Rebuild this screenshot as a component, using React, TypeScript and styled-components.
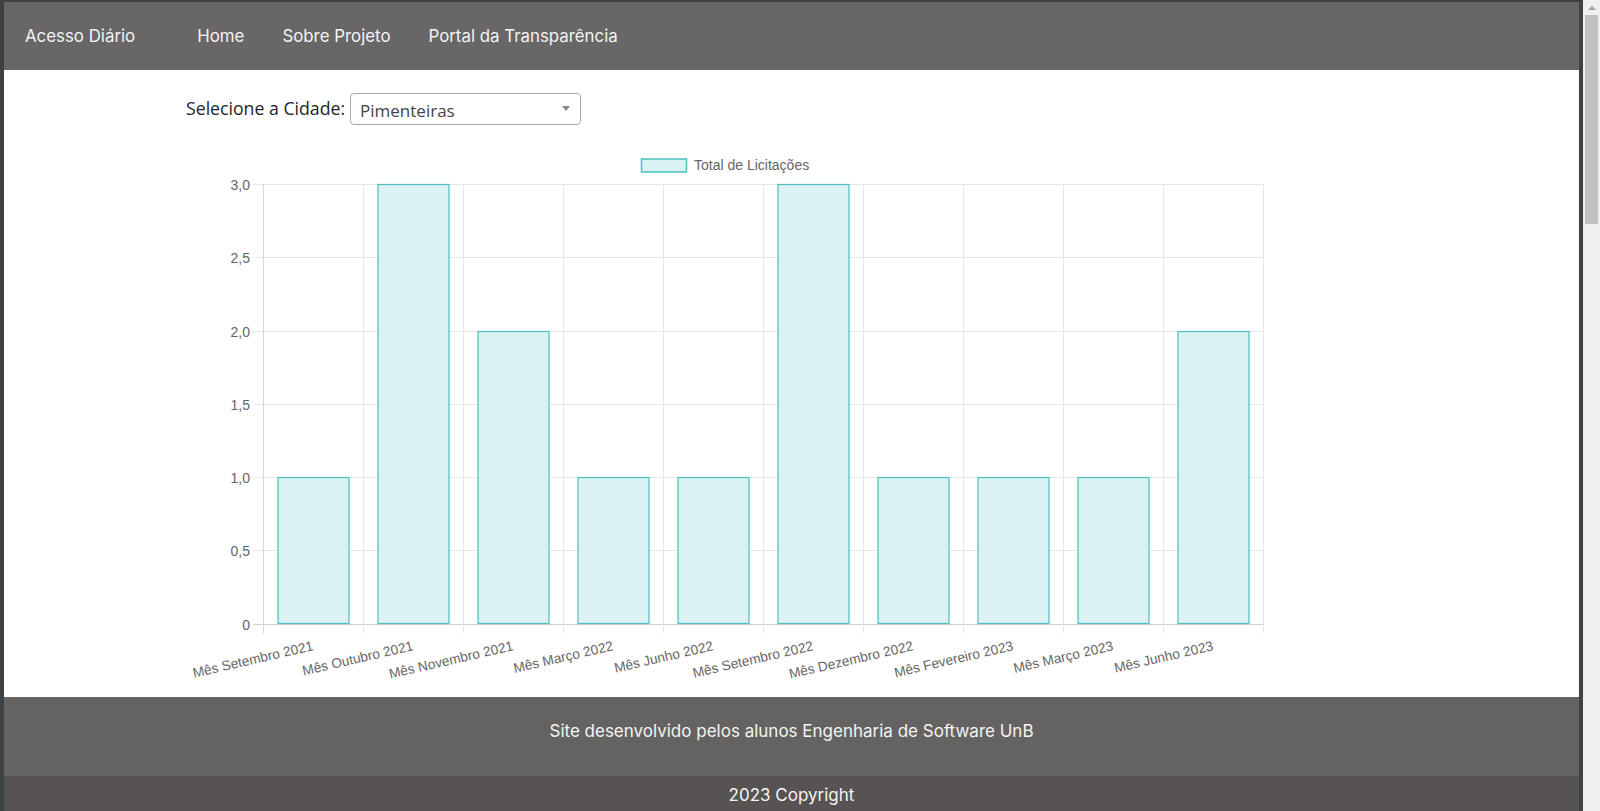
import styled, { createGlobalStyle } from 'styled-components';

const GlobalStyle = createGlobalStyle`
  html, body {
    margin: 0;
    padding: 0;
    background: #3f4245;
    overflow: hidden;
  }
  * { box-sizing: border-box; }
`;

const months = [
    { label: 'Mês Setembro 2021', total: 1 },
    { label: 'Mês Outubro 2021', total: 3 },
    { label: 'Mês Novembro 2021', total: 2 },
    { label: 'Mês Março 2022', total: 1 },
    { label: 'Mês Junho 2022', total: 1 },
    { label: 'Mês Setembro 2022', total: 3 },
    { label: 'Mês Dezembro 2022', total: 1 },
    { label: 'Mês Fevereiro 2023', total: 1 },
    { label: 'Mês Março 2023', total: 1 },
    { label: 'Mês Junho 2023', total: 2 },
];

// chart geometry, in page pixels
const LEFT = 263;
const RIGHT = 1263;
const TOP = 184;
const BOTTOM = 623.5;
const MAX = 3;
const STEP = (RIGHT - LEFT) / months.length;
const BAR = 71;
const ORIGIN_X = 183;
const ORIGIN_Y = 145;

const yOf = (v: number) => BOTTOM - (v / MAX) * (BOTTOM - TOP);

const Shell = styled.div`
    display: flex;
    gap: 4px;
    height: 811px;
    padding-left: 4px;
    overflow: hidden;
`;

const Page = styled.div`
    width: 1575px;
    margin-top: 2px;
    display: flex;
    flex-direction: column;
    background: #ffffff;
    overflow: hidden;
`;

const ScrollTrack = styled.div`
    width: 17px;
    background: #f0f0f0;
    display: flex;
    flex-direction: column;
    align-items: center;
    padding-top: 6px;
    gap: 5px;
`;

const ScrollArrow = styled.div`
    width: 0;
    height: 0;
    border-left: 4px solid transparent;
    border-right: 4px solid transparent;
    border-bottom: 4px solid #a3a3a3;
`;

const ScrollThumb = styled.div`
    width: 13px;
    height: 209px;
    background: #c1c1c1;
`;

const NavBar = styled.nav`
    height: 68px;
    flex-shrink: 0;
    background: #686666;
    display: flex;
    align-items: center;
    padding-left: 21px;
    font-family: Inter, "Liberation Sans", sans-serif;
    font-size: 16.85px;
    color: #f4f4f4;
`;

const Brand = styled.span`
    margin-right: 62px;
`;

const NavLinks = styled.div`
    display: flex;
    gap: 38px;
`;

const NavLink = styled.a`
    color: inherit;
    text-decoration: none;
`;

const Main = styled.main`
    height: 627px;
    flex-shrink: 0;
    padding: 23px 0 0 179px;
`;

const SelectRow = styled.div`
    display: flex;
    align-items: center;
    gap: 5px;
    height: 32px;
    padding-left: 3px;
    font-family: "Open Sans", "Noto Sans", sans-serif;
    font-size: 17.7px;
    color: #212529;
`;

const Label = styled.label`
    margin-top: -3px;
`;

const SelectBox = styled.div`
    width: 231px;
    height: 32px;
    border: 1px solid #aaaaaa;
    border-radius: 4px;
    background: #fff;
    display: flex;
    align-items: center;
    justify-content: space-between;
    padding: 2px 10px 0 9px;
    color: #444;
    font-size: 17px;
`;

const Caret = styled.span`
    width: 0;
    height: 0;
    border-left: 4px solid transparent;
    border-right: 4px solid transparent;
    border-top: 5px solid #888;
    margin-top: -3px;
`;

const ChartSvg = styled.svg`
    display: block;
    margin-top: 20px;
    font-family: "Liberation Sans", Arial, sans-serif;
`;

const FooterTop = styled.footer`
    height: 79px;
    flex-shrink: 0;
    background: #646361;
    padding-top: 22px;
    text-align: center;
    font-family: Inter, "Liberation Sans", sans-serif;
    font-size: 17px;
    line-height: 24px;
    color: #f4f4f4;
`;

const FooterBottom = styled.div`
    height: 40px;
    flex-shrink: 0;
    background: #575352;
    padding-top: 7px;
    text-align: center;
    font-family: Inter, "Liberation Sans", sans-serif;
    font-size: 17px;
    line-height: 24px;
    color: #f4f4f4;
`;

const BarChart = () => {
    const ticks = [0, 0.5, 1, 1.5, 2, 2.5, 3];
    return (
        <ChartSvg width={1100} height={545} viewBox="0 0 1100 545">
            <g transform={`translate(${-ORIGIN_X},${-ORIGIN_Y})`}>
                {/* legend */}
                <rect x={641.5} y={159} width={45} height={13} fill="#dbf2f2" stroke="#4bc0c0" strokeWidth={1.5} />
                <text x={694} y={165} fontSize={14} fill="#666" dominantBaseline="central">
                    Total de Licitações
                </text>

                {/* horizontal grid */}
                {ticks.map((t) => (
                    <line
                        key={t}
                        x1={LEFT - 10}
                        x2={RIGHT}
                        y1={Math.round(yOf(t)) + 0.5}
                        y2={Math.round(yOf(t)) + 0.5}
                        stroke={t === 0 ? '#cfcfcf' : '#e6e6e6'}
                        strokeWidth={1}
                    />
                ))}
                {/* vertical grid */}
                {Array.from({ length: months.length + 1 }).map((_, i) => (
                    <line
                        key={i}
                        x1={LEFT + i * STEP + 0.5}
                        x2={LEFT + i * STEP + 0.5}
                        y1={TOP}
                        y2={BOTTOM + 10}
                        stroke={i === 0 ? '#d6d6d6' : '#e6e6e6'}
                        strokeWidth={1}
                    />
                ))}

                {/* y labels */}
                {ticks.map((t) => (
                    <text
                        key={t}
                        x={250}
                        y={Math.round(yOf(t)) + 0.5}
                        fontSize={14}
                        fill="#666"
                        textAnchor="end"
                        dominantBaseline="central"
                    >
                        {t === 0 ? '0' : t.toFixed(1).replace('.', ',')}
                    </text>
                ))}

                {/* bars */}
                {months.map((m, i) => {
                    const cx = LEFT + STEP * (i + 0.5);
                    const top = Math.round(yOf(m.total)) + 0.5;
                    return (
                        <rect
                            key={m.label}
                            x={cx - BAR / 2 + 0.5}
                            y={top}
                            width={BAR}
                            height={BOTTOM - top}
                            fill="#dbf2f2"
                            stroke="#4bc0c0"
                            strokeWidth={1.2}
                        />
                    );
                })}

                {/* x labels */}
                {months.map((m, i) => {
                    const cx = LEFT + STEP * (i + 0.5);
                    return (
                        <text
                            key={m.label}
                            x={cx + 1}
                            y={650}
                            fontSize={13.7}
                            fill="#666"
                            textAnchor="end"
                            transform={`rotate(-13 ${cx + 1} 650)`}
                        >
                            {m.label}
                        </text>
                    );
                })}
            </g>
        </ChartSvg>
    );
};

export default function App() {
    return (
        <>
            <GlobalStyle />
            <Shell>
                <Page>
                    <NavBar>
                        <Brand>Acesso Diário</Brand>
                        <NavLinks>
                            <NavLink href="#">Home</NavLink>
                            <NavLink href="#">Sobre Projeto</NavLink>
                            <NavLink href="#">Portal da Transparência</NavLink>
                        </NavLinks>
                    </NavBar>
                    <Main>
                        <SelectRow>
                            <Label>Selecione a Cidade:</Label>
                            <SelectBox>
                                <span>Pimenteiras</span>
                                <Caret />
                            </SelectBox>
                        </SelectRow>
                        <BarChart />
                    </Main>
                    <FooterTop>Site desenvolvido pelos alunos Engenharia de Software UnB</FooterTop>
                    <FooterBottom>2023 Copyright</FooterBottom>
                </Page>
                <ScrollTrack>
                    <ScrollArrow />
                    <ScrollThumb />
                </ScrollTrack>
            </Shell>
        </>
    );
}
